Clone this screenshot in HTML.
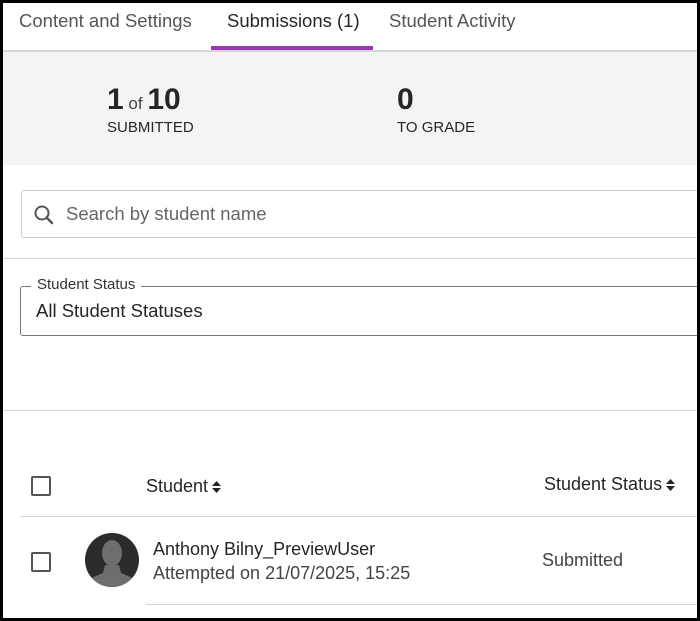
<!DOCTYPE html>
<html><head><meta charset="utf-8"><style>
*{margin:0;padding:0;box-sizing:border-box}
html,body{width:700px;height:621px;overflow:hidden;background:#000}
#w{position:absolute;left:3px;top:3px;width:694px;height:615px;background:#fff;overflow:hidden;font-family:"Liberation Sans",sans-serif;color:#262626}
.a{position:absolute;white-space:nowrap}
.tab{font-size:18.5px;color:#555;top:7px}
.line{position:absolute;height:1px;background:#d6d6d6}
.cb{position:absolute;width:20px;height:20px;border:2px solid #555;border-radius:2px}
.s{display:inline-block;vertical-align:middle;margin-left:4px}
</style></head><body><div id="w">
<div class="a tab" style="left:16px">Content and Settings</div>
<div class="a tab" style="left:224px;color:#262626">Submissions (1)</div>
<div class="a tab" style="left:386px">Student Activity</div>
<div style="position:absolute;left:208px;top:43px;width:162px;height:4px;background:#9b37b3"></div>
<div style="position:absolute;left:0;top:47px;width:694px;height:2px;background:#d6d6d6"></div>
<div style="position:absolute;left:0;top:49px;width:694px;height:113px;background:#f4f4f4"></div>
<div class="a" style="left:104px;top:80px;font-size:30px;font-weight:bold">1<span style="font-size:17px;font-weight:normal;color:#444"> of </span>10</div>
<div class="a" style="left:104px;top:116px;font-size:15px;color:#262626">SUBMITTED</div>
<div class="a" style="left:394px;top:80px;font-size:30px;font-weight:bold">0</div>
<div class="a" style="left:394px;top:116px;font-size:15px">TO GRADE</div>
<div style="position:absolute;left:18px;top:187px;width:690px;height:48px;border:1px solid #cdcdcd;border-radius:3px"></div>
<svg style="position:absolute;left:30px;top:201px" width="22" height="22" viewBox="0 0 22 22"><circle cx="9" cy="9" r="6.5" fill="none" stroke="#555" stroke-width="2"/><line x1="13.5" y1="13.5" x2="19" y2="19" stroke="#555" stroke-width="2.4" stroke-linecap="round"/></svg>
<div class="a" style="left:63px;top:200px;font-size:18.5px;color:#666">Search by student name</div>
<div class="line" style="left:0;top:255px;width:694px"></div>
<div style="position:absolute;left:17px;top:283px;width:690px;height:50px;border:1px solid #777;border-radius:3px"></div>
<div class="a" style="left:28px;top:273px;font-size:15px;background:#fff;padding:0 6px;color:#333">Student Status</div>
<div class="a" style="left:33px;top:297px;font-size:18.5px;color:#262626">All Student Statuses</div>
<div class="line" style="left:0;top:407px;width:694px"></div>
<div class="cb" style="left:28px;top:473px"></div>
<div class="a" style="left:143px;top:473px;font-size:18px">Student<svg class="s" width="9" height="12" viewBox="0 0 9 12"><path d="M4.5 0L9 5H0Z M4.5 12L9 7H0Z" fill="#262626"/></svg></div>
<div class="a" style="left:541px;top:471px;font-size:18px">Student Status<svg class="s" width="9" height="12" viewBox="0 0 9 12"><path d="M4.5 0L9 5H0Z M4.5 12L9 7H0Z" fill="#262626"/></svg></div>
<div class="line" style="left:17px;top:513px;width:690px"></div>
<div class="cb" style="left:28px;top:549px"></div>
<svg style="position:absolute;left:82px;top:530px" width="54" height="54" viewBox="0 0 54 54"><defs><clipPath id="c"><ellipse cx="27" cy="27" rx="27" ry="27"/></clipPath></defs><ellipse cx="27" cy="27" rx="27" ry="27" fill="#2b2b2b"/><g clip-path="url(#c)" fill="#6e6e6e"><ellipse cx="27" cy="20" rx="10" ry="13"/><path d="M20 32 L34 32 L36 40 L50 46 L54 54 L0 54 L4 46 L18 40 Z"/></g></svg>
<div class="a" style="left:150px;top:536px;font-size:18px;color:#262626">Anthony Bilny_PreviewUser</div>
<div class="a" style="left:150px;top:560px;font-size:18px;color:#444">Attempted on 21/07/2025, 15:25</div>
<div class="a" style="left:539px;top:547px;font-size:18px;color:#444">Submitted</div>
<div class="line" style="left:143px;top:601px;width:560px"></div>
</div></body></html>
